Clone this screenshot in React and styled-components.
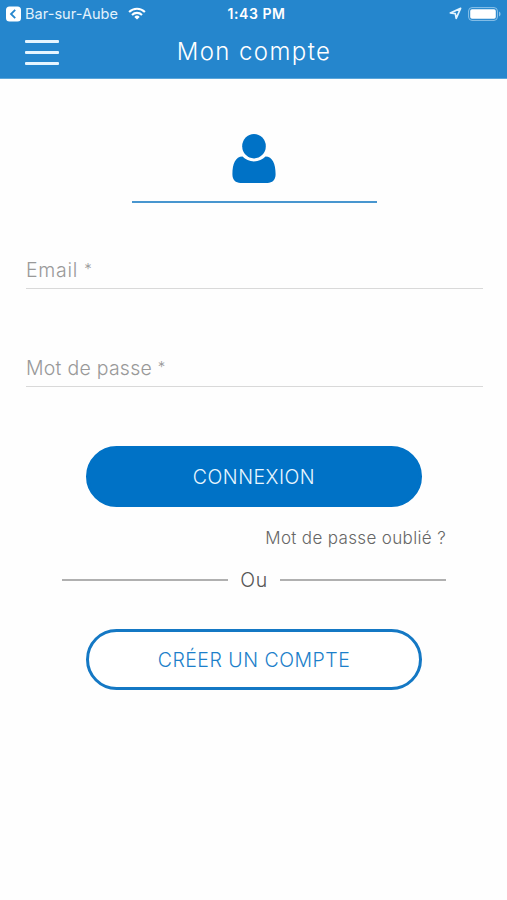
import React from "react";
import styled, { createGlobalStyle } from "styled-components";

const GlobalStyle = createGlobalStyle`
  * {
    box-sizing: border-box;
  }

  body {
    margin: 0;
    background-color: #fff;
    font-family: Inter, "Open Sans", sans-serif;
    font-weight: 300;
  }
`;

const Screen = styled.div`
  width: 100%;
  min-height: 900px;
  background-color: #fefefe;
`;

const Header = styled.header`
  height: 79px;
  background-color: #2586cd;
  border-bottom: 1px solid #5ba6da;
  color: #fff;
`;

const StatusBar = styled.div`
  height: 27px;
  padding: 0 6px;
  display: grid;
  grid-template-columns: 1fr auto 1fr;
  align-items: center;
  line-height: 27px;
`;

const StatusGroup = styled.div`
  display: flex;
  align-items: center;
  justify-content: ${(props) => (props.$end ? "flex-end" : "flex-start")};
  gap: ${(props) => (props.$end ? "6px" : "0")};
`;

const BackApp = styled.span`
  margin: 0 10px 0 4px;
  font-size: 14.5px;
  font-weight: 400;
  letter-spacing: 0.05px;
  color: #e3f2fc;
`;

const Clock = styled.span`
  font-size: 14px;
  font-weight: 600;
  letter-spacing: 0.55px;
  padding-left: 6px;
`;

const NavBar = styled.div`
  height: 50px;
  padding: 0 24px 0 25px;
  display: grid;
  grid-template-columns: 34px 1fr 34px;
  align-items: center;
`;

const MenuButton = styled.button`
  height: 25px;
  padding: 0;
  border: none;
  background: none;
  display: flex;
  flex-direction: column;
  justify-content: space-between;
`;

const MenuLine = styled.span`
  width: 34px;
  height: 3px;
  border-radius: 1px;
  background-color: #e6f5ff;
`;

const Title = styled.h1`
  margin: 0;
  font-size: 24px;
  font-weight: 300;
  line-height: 30px;
  letter-spacing: ${(props) => props.$spacing};
  text-align: center;
`;

const Form = styled.form`
  display: flex;
  flex-direction: column;
  padding: 55px 24px 0 26px;
`;

const Avatar = styled.div`
  width: 245px;
  height: 69px;
  margin: 0 1px 52px 0;
  border-bottom: 2px solid #4896cf;
  align-self: center;
  display: flex;
  justify-content: center;
`;

const Field = styled.label`
  height: 34px;
  margin-bottom: 64px;
  border-bottom: 1px solid #d9d9d9;
  font-size: 19.5px;
  line-height: 31px;
  letter-spacing: ${(props) => props.$spacing};
  color: #999;
`;

const Required = styled.span`
  font-size: 15px;
  line-height: 1;
  vertical-align: 3px;
`;

const Button = styled.button`
  width: 336px;
  height: 61px;
  margin-right: 1px;
  padding: 0;
  align-self: center;
  border: 3px solid ${(props) => (props.$outline ? "#1478c4" : "#0072c6")};
  border-radius: 31px;
  background-color: ${(props) => (props.$outline ? "#fff" : "#0072c6")};
  color: ${(props) => (props.$outline ? "#1c7fca" : "#e8f6ff")};
  font-family: inherit;
  font-size: 19.5px;
  font-weight: 300;
  letter-spacing: ${(props) => props.$spacing};
`;

const SubmitButton = styled(Button)`
  margin-top: -5px;
`;

const ForgotLink = styled.a`
  margin: 19px 37px 0 0;
  align-self: flex-end;
  font-size: 17px;
  line-height: 24px;
  letter-spacing: ${(props) => props.$spacing};
  color: #666;
`;

const Separator = styled.div`
  height: 30px;
  margin: 15px 37px 34px 36px;
  display: grid;
  grid-template-columns: 166px 1fr 166px;
  align-items: center;
  font-size: 19.5px;
  letter-spacing: 0.6px;
  text-align: center;
  color: #555;
`;

const Rule = styled.span`
  height: 2px;
  background-color: #b0b0b0;
`;

const BackIcon = () => (
  <svg width="15" height="16" viewBox="0 0 15 16">
    <rect y="0.5" width="15" height="15" rx="3.5" fill="#fff" />
    <path d="M9.2 3.8 5 8l4.2 4.2" fill="none" stroke="#2586cd" strokeWidth="1.8" />
  </svg>
);

const WifiIcon = () => (
  <svg width="18" height="13" viewBox="0 0 18 13">
    <g fill="none" stroke="#fff" strokeWidth="2.1">
      <path d="M1.1 4.9a11.3 11.3 0 0 1 15.8 0" />
      <path d="M4 7.9a7.2 7.2 0 0 1 10 0" />
    </g>
    <path d="M9 12.6 6.3 9.9a3.8 3.8 0 0 1 5.4 0z" fill="#fff" />
  </svg>
);

const LocationIcon = () => (
  <svg width="13" height="13" viewBox="0 0 13 13">
    <path
      d="M11.6 1.4 1.3 6l5 .6.9 4.8z"
      fill="none"
      stroke="#e3f4ff"
      strokeWidth="1.7"
      strokeLinejoin="round"
    />
  </svg>
);

const BatteryIcon = () => (
  <svg width="33" height="14" viewBox="0 0 33 14">
    <rect x="0.6" y="0.6" width="28.8" height="12.8" rx="3.4" fill="none" stroke="#8dc3e9" />
    <rect x="2.2" y="2.2" width="25.6" height="9.6" rx="1.8" fill="#fff" />
    <path d="M31 4.6q1.6.8 1.6 2.4T31 9.4z" fill="#8dc3e9" />
  </svg>
);

const UserIcon = () => (
  <svg width="44" height="50" viewBox="0 0 44 50" fill="#0072c6">
    <ellipse cx="22" cy="12.2" rx="11.8" ry="12.2" />
    <path d="M10.5 22.6C13.4 25.6 17.4 27.4 22 27.4s8.600-1.800 11.500-4.800C40.500 22.600 43.600 30 43.600 40.300 43.600 45.800 40.300 49 35.500 49h-27C3.700 49 .4 45.800.4 40.300.4 30 3.500 22.600 10.500 22.600z" />
  </svg>
);

const App = () => {
  return (
    <Screen>
      <GlobalStyle />
      <Header>
        <StatusBar>
          <StatusGroup>
            <BackIcon />
            <BackApp>Bar-sur-Aube</BackApp>
            <WifiIcon />
          </StatusGroup>
          <Clock>1:43 PM</Clock>
          <StatusGroup $end>
            <LocationIcon />
            <BatteryIcon />
          </StatusGroup>
        </StatusBar>
        <NavBar>
          <MenuButton aria-label="Menu">
            <MenuLine />
            <MenuLine />
            <MenuLine />
          </MenuButton>
          <Title $spacing="1.4px">Mon compte</Title>
        </NavBar>
      </Header>
      <Form>
        <Avatar>
          <UserIcon />
        </Avatar>
        <Field $spacing="0.7px">
          Email <Required>*</Required>
        </Field>
        <Field $spacing="0.25px">
          Mot de passe <Required>*</Required>
        </Field>
        <SubmitButton type="button" $spacing="0.5px">
          CONNEXION
        </SubmitButton>
        <ForgotLink $spacing="0.35px">Mot de passe oublié ?</ForgotLink>
        <Separator>
          <Rule />
          <span>Ou</span>
          <Rule />
        </Separator>
        <Button type="button" $outline $spacing="0.5px">
          CRÉER UN COMPTE
        </Button>
      </Form>
    </Screen>
  );
};

export default App;
